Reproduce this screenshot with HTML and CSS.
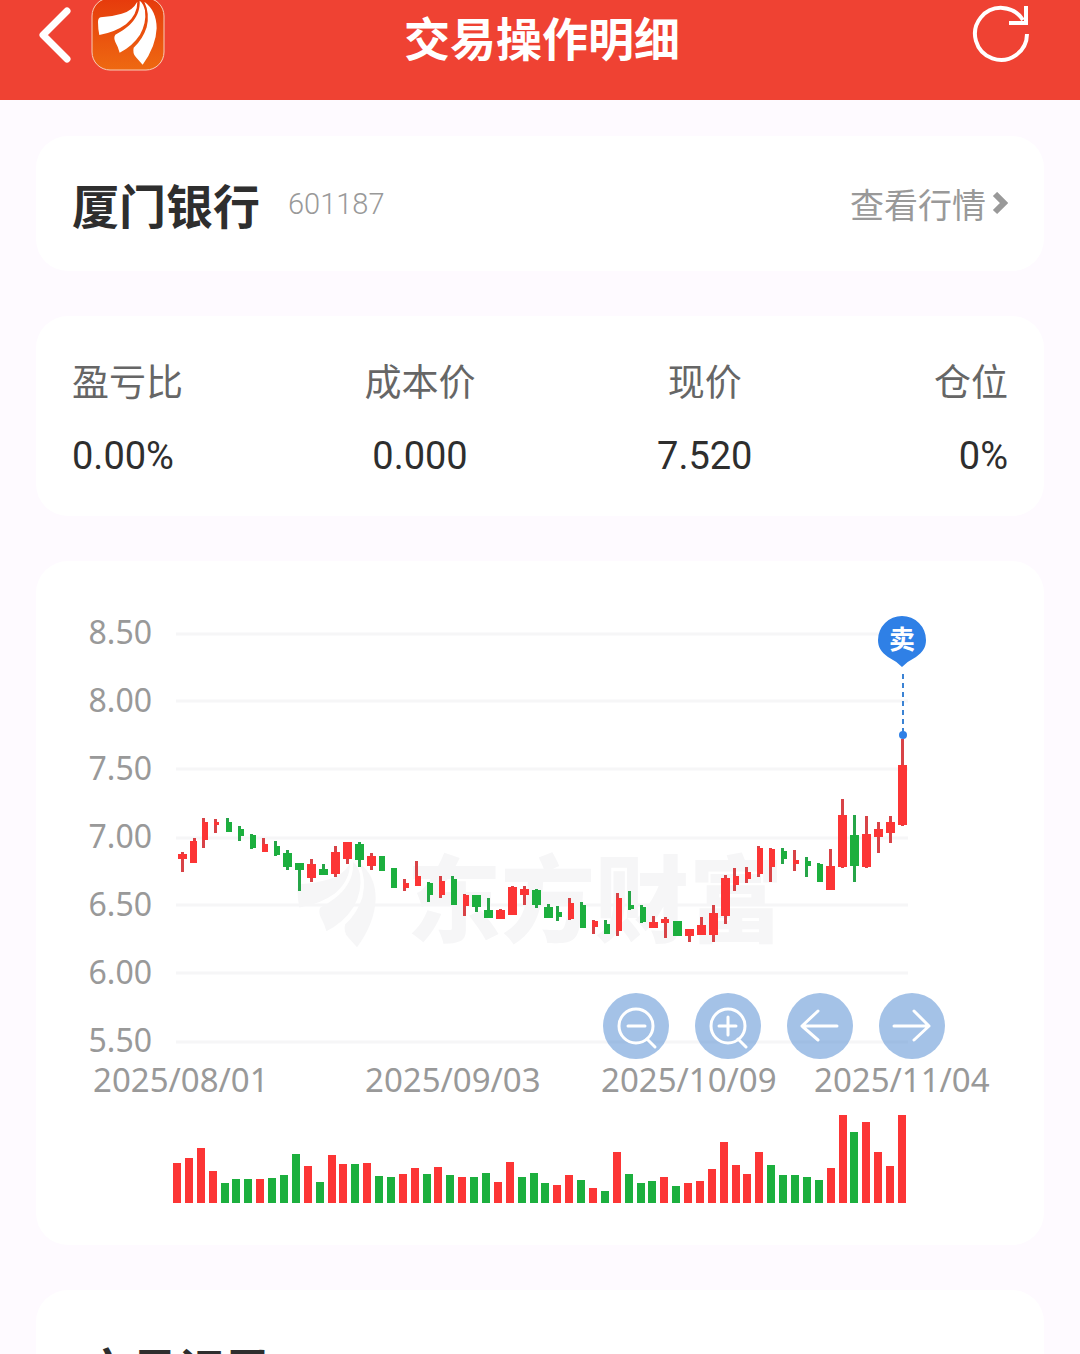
FILE: index.html
```html
<!DOCTYPE html>
<html lang="zh-CN">
<head>
    <meta charset="UTF-8">
    <meta name="viewport" content="width=device-width, initial-scale=1.0">
    <title>交易操作明细</title>
    <link rel="stylesheet" href="styles.css">
</head>
<body>
    <header class="topbar">
        <div class="topbar-left">
            <button class="icon-btn back-btn" aria-label="返回">
                <svg width="34" height="56" viewBox="0 0 34 56"><path d="M29 4L5 28L29 52" fill="none" stroke="#fff" stroke-width="7" stroke-linecap="round" stroke-linejoin="round"/></svg>
            </button>
            <svg class="logo" width="74" height="74" viewBox="0 0 74 74">
                <defs>
                    <linearGradient id="logoBg" x1="0" y1="0" x2="0" y2="1">
                        <stop offset="0" stop-color="#e63a0c"/>
                        <stop offset="1" stop-color="#ee6911"/>
                    </linearGradient>
                    <g id="feathers">
                        <path d="M302 52Q294 54 294 66Q294 86 298 105Q345 97 378 73Q413 43 412 5Q398 32 365 41Q335 50 302 52Z"/>
                        <path d="M419 2C422 50 389 82 346 104Q340 112 346 126Q355 142 359 158Q397 139 420 104Q440 69 435 31Q430 10 419 2Z"/>
                        <path d="M433 5Q450 40 440 82Q428 119 401 143Q397 160 408 172L428 194Q468 140 470 85Q470 32 433 5Z"/>
                    </g>
                </defs>
                <rect x="1" y="1" width="72" height="72" rx="18" fill="url(#logoBg)" stroke="#f8cdb8" stroke-width="1"/>
                <use href="#feathers" transform="translate(-91 3) scale(.3333)" fill="#fff"/>
            </svg>
        </div>
        <h1>交易操作明细</h1>
        <button class="icon-btn refresh-btn" aria-label="刷新">
            <svg width="60" height="60" viewBox="0 0 60 60"><path d="M55 31A26 26 0 1 1 51 17M54 3V20H37" fill="none" stroke="#fff" stroke-width="4"/></svg>
        </button>
    </header>

    <main class="content">
        <section class="card stock">
            <h2>厦门银行</h2>
            <span class="code">601187</span>
            <a class="quote-link" href="#">查看行情<svg width="16" height="24" viewBox="0 0 16 24"><path d="M3 2L12 11L3 20" fill="none" stroke="#999" stroke-width="6"/></svg></a>
        </section>

        <section class="card">
            <dl class="stats">
                <div><dt>盈亏比</dt><dd>0.00%</dd></div>
                <div><dt>成本价</dt><dd>0.000</dd></div>
                <div><dt>现价</dt><dd>7.520</dd></div>
                <div><dt>仓位</dt><dd>0%</dd></div>
            </dl>
        </section>

        <section class="card chart-card">
            <svg class="chart" viewBox="36 560 1008 684">
                <g class="watermark">
                    <use href="#feathers" transform="translate(167 860) scale(.444)"/>
                    <text x="407" y="934">东方财富</text>
                </g>
                <path class="grid" d="M176 633H908M176 700H908M176 768H908M176 837H908M176 904H908M176 972H908M176 1041H908"/>
                <g class="axis axis-y">
                    <text x="152" y="643">8.50</text>
                    <text x="152" y="711">8.00</text>
                    <text x="152" y="779">7.50</text>
                    <text x="152" y="847">7.00</text>
                    <text x="152" y="915">6.50</text>
                    <text x="152" y="983">6.00</text>
                    <text x="152" y="1051">5.50</text>
                </g>
                <g class="axis axis-x">
                    <text x="93" y="1091">2025/08/01</text>
                    <text x="365" y="1091">2025/09/03</text>
                    <text x="601" y="1091">2025/10/09</text>
                    <text x="814" y="1091">2025/11/04</text>
                </g>
                <g id="candles"></g>
                <g id="volumes"></g>
                <g class="marker">
                    <path d="M902 666Q896 660 888 656C881 651 878 646 878 639A24 24 0 0 1 926 639C926 646 923 651 916 656Q908 660 902 666Z"/>
                    <path class="marker-line" d="M903 673V731"/>
                    <circle cx="903" cy="734" r="4"/>
                    <text x="902" y="648">卖</text>
                </g>
            </svg>
            <div class="chart-tools">
                <button aria-label="缩小"><svg viewBox="0 0 66 66"><circle cx="33" cy="33" r="17"/><path d="M25 33H42M44 46L52 54"/></svg></button>
                <button aria-label="放大"><svg viewBox="0 0 66 66"><circle cx="33" cy="33" r="17"/><path d="M24 33H41M33 24V42M43 46L51 54"/></svg></button>
                <button aria-label="左移"><svg viewBox="0 0 66 66"><path d="M50 33H15M31 18L15 33L31 47"/></svg></button>
                <button aria-label="右移"><svg viewBox="0 0 66 66"><path d="M15 33H50M35 18L50 33L35 47"/></svg></button>
            </div>
        </section>

        <section class="card records">
            <h2>交易记录</h2>
        </section>
    </main>

    <script src="chart.js"></script>
</body>
</html>
```
FILE: styles.css
```css
body {
    margin: 0;
    height: 100vh;
    overflow: hidden;
    background-color: #fefaff;
    color: #2e2e2e;
    font-family: "Noto Sans CJK SC", sans-serif;
}
h1, h2, dl, dd {
    margin: 0;
}
button {
    border: none;
    padding: 0;
    cursor: pointer;
}
svg {
    display: block;
}
.topbar {
    display: grid;
    grid-template-columns: 1fr auto 1fr;
    align-items: start;
    height: 100px;
    padding: 0 48px 0 38px;
    background-color: #ef4233;
    color: #fff;
    box-sizing: border-box;
    overflow: hidden;
}
.topbar-left {
    display: flex;
    gap: 19px;
}
.topbar h1 {
    font-size: 46px;
    line-height: 72px;
    margin-left: 14px;
}
.icon-btn {
    background: none;
}
.back-btn {
    margin-top: 7px;
    align-self: start;
}
.logo {
    margin-top: -3px;
}
.refresh-btn {
    justify-self: end;
    margin-top: 3px;
}
.content {
    display: flex;
    flex-direction: column;
    gap: 45px;
    padding: 36px;
}
.card {
    background-color: #fff;
    border-radius: 32px;
    padding: 36px;
}
.stock {
    display: flex;
    align-items: center;
}
h2 {
    font-size: 47px;
    line-height: 63px;
}
.code {
    margin-left: 28px;
    font-family: Roboto, sans-serif;
    font-weight: 300;
    font-size: 29px;
    line-height: 36px;
    color: #999;
}
.quote-link {
    display: flex;
    align-items: center;
    gap: 6px;
    margin-left: auto;
    font-size: 34px;
    line-height: 48px;
    color: #999;
    text-decoration: none;
}
.stats {
    display: flex;
    justify-content: space-between;
    text-align: center;
}
.stats div:first-child {
    text-align: left;
}
.stats div:last-child {
    text-align: right;
}
.stats dt {
    font-size: 37px;
    line-height: 56px;
    color: #666;
}
.stats dd {
    margin-top: 24px;
    font-family: Roboto, sans-serif;
    font-size: 38px;
    line-height: 48px;
}
.chart-card {
    position: relative;
    padding: 0;
}
.chart {
    width: 100%;
}
.grid {
    fill: none;
    stroke: #f6f6f7;
    stroke-width: 3;
}
.axis {
    font-family: "Noto Sans", sans-serif;
    fill: #999;
}
.axis-y {
    font-size: 32px;
    text-anchor: end;
}
.axis-x {
    font-size: 33px;
}
.watermark {
    font-size: 94px;
    font-weight: 900;
    fill: #f6f6f7;
}
.up {
    fill: #fc3535;
}
.down {
    fill: #1caf3e;
}
.wick.up {
    fill: #d84347;
}
.wick.down {
    fill: #26a548;
}
.marker {
    fill: #2f80e6;
}
.marker text {
    fill: #fff;
    font-size: 26px;
    font-weight: 700;
    text-anchor: middle;
}
.marker-line {
    stroke: #3b83d4;
    stroke-width: 2;
    stroke-dasharray: 5 4;
}
.chart-tools {
    position: absolute;
    right: 9.8%;
    bottom: 27.2%;
    display: flex;
    gap: 26px;
}
.chart-tools button {
    width: 66px;
    height: 66px;
    border-radius: 50%;
    background-color: rgba(74, 134, 208, 0.5);
}
.chart-tools svg {
    fill: none;
    stroke: #fff;
    stroke-width: 3;
    stroke-linecap: round;
    stroke-linejoin: round;
}
.records h2 {
    padding: 10px 12px;
}
```
FILE: chart.js
```javascript
// x, body width, high, body top, body bottom, low, up(1)/down(0)
const candles = [
    [178, 9, 851, 853, 858, 871, 1], [190, 7, 837, 840, 862, 862, 1],
    [202, 6, 817, 821, 839, 847, 1], [214, 5, 818, 821, 824, 832, 1],
    [226, 6, 817, 821, 831, 831, 0], [238, 6, 825, 828, 835, 840, 0],
    [250, 6, 833, 834, 847, 848, 0], [262, 6, 837, 843, 851, 851, 1],
    [274, 6, 840, 845, 854, 855, 0], [283, 9, 849, 852, 866, 869, 0],
    [295, 9, 862, 862, 869, 890, 0], [307, 9, 858, 863, 877, 881, 1],
    [319, 9, 863, 868, 874, 874, 0], [331, 9, 845, 851, 873, 876, 1],
    [343, 9, 841, 841, 858, 863, 1], [355, 9, 841, 843, 859, 866, 0],
    [367, 9, 852, 855, 865, 869, 1], [379, 6, 855, 855, 870, 870, 0],
    [391, 6, 867, 867, 887, 887, 0], [403, 6, 878, 882, 887, 890, 1],
    [415, 6, 860, 875, 885, 885, 1], [427, 6, 881, 882, 894, 901, 0],
    [439, 6, 875, 880, 894, 897, 1], [451, 6, 875, 878, 904, 904, 0],
    [463, 6, 893, 894, 905, 915, 1], [472, 9, 894, 894, 906, 911, 0],
    [484, 9, 897, 909, 917, 917, 0], [496, 9, 908, 909, 918, 918, 1],
    [508, 9, 885, 886, 914, 914, 1], [520, 9, 885, 888, 894, 904, 1],
    [532, 9, 888, 889, 904, 907, 0], [544, 9, 903, 906, 917, 917, 0],
    [556, 6, 905, 911, 916, 920, 0], [568, 6, 897, 902, 918, 919, 1],
    [580, 6, 901, 904, 927, 927, 0], [592, 6, 919, 920, 926, 933, 1],
    [604, 6, 919, 923, 933, 933, 0], [616, 6, 892, 897, 930, 935, 1],
    [628, 6, 890, 904, 908, 909, 0], [640, 6, 904, 906, 921, 922, 0],
    [649, 9, 915, 921, 927, 927, 1], [661, 8, 916, 918, 922, 937, 1],
    [673, 9, 920, 920, 935, 935, 0], [685, 9, 928, 928, 935, 941, 1],
    [697, 9, 916, 924, 934, 934, 1], [709, 9, 904, 912, 934, 941, 1],
    [721, 9, 874, 877, 915, 923, 1], [733, 6, 867, 875, 884, 890, 1],
    [745, 6, 866, 871, 878, 882, 1], [757, 6, 845, 847, 873, 876, 1],
    [769, 6, 847, 848, 866, 881, 1], [781, 6, 847, 850, 858, 863, 0],
    [793, 6, 849, 859, 863, 870, 1], [805, 6, 856, 860, 865, 876, 0],
    [817, 6, 862, 863, 881, 881, 0], [826, 9, 848, 865, 889, 889, 1],
    [838, 9, 798, 814, 866, 867, 1], [850, 9, 814, 834, 865, 881, 0],
    [862, 9, 815, 833, 866, 867, 1], [874, 9, 821, 828, 836, 852, 1],
    [886, 9, 815, 821, 832, 842, 1], [898, 9, 738, 764, 824, 825, 1]
];

const volumes = [
    40, 45, 55, 32, 20, 24, 24, 24, 25, 28, 49, 37, 21, 48, 39, 39,
    40, 27, 26, 29, 35, 29, 36, 28, 26, 26, 30, 21, 41, 26, 30,
    20, 18, 28, 23, 15, 12, 51, 29, 20, 22, 26, 17, 20, 22, 34, 61,
    38, 29, 51, 38, 28, 28, 26, 23, 35, 88, 71, 81, 51, 37, 88
];
const volumeUp = '1111000100010110100110101001100' + '0110101000101111111000001101111';

function addRect(parent, x, y, width, height, className) {
    const rect = document.createElementNS('http://www.w3.org/2000/svg', 'rect');
    rect.setAttribute('x', x);
    rect.setAttribute('y', y);
    rect.setAttribute('width', width);
    rect.setAttribute('height', height);
    rect.setAttribute('class', className);
    parent.appendChild(rect);
}

const candleGroup = document.getElementById('candles');
candles.forEach(([x, width, high, top, bottom, low, up]) => {
    const dir = up ? 'up' : 'down';
    const wickX = width > 6 ? x + 3 : x;
    addRect(candleGroup, wickX, high, 3, low - high, 'wick ' + dir);
    addRect(candleGroup, x, top, width, bottom - top, dir);
});

const volumeGroup = document.getElementById('volumes');
const step = (898 - 173) / (volumes.length - 1);
volumes.forEach((height, i) => {
    addRect(volumeGroup, Math.round(173 + i * step), 1202 - height, 8, height, volumeUp[i] === '1' ? 'up' : 'down');
});
```
